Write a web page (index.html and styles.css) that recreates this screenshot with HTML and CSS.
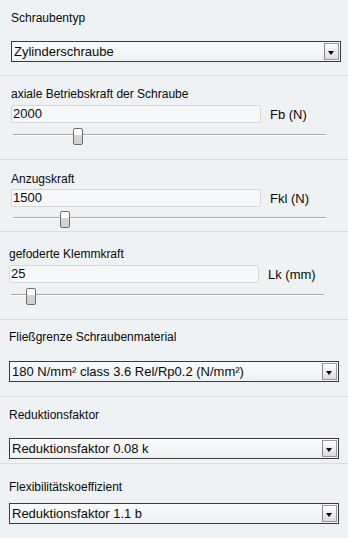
FILE: index.html
```html
<!DOCTYPE html>
<html lang="de">
<head>
    <meta charset="UTF-8">
    <meta name="viewport" content="width=device-width, initial-scale=1.0">
    <title>Schraubenberechnung</title>
    <link rel="stylesheet" href="styles.css">
</head>
<body>
    <div class="panel">
        <div class="section sec-1">
            <div class="label">Schraubentyp</div>
            <div class="select"><span class="value">Zylinderschraube</span><span class="arrow"></span></div>
        </div>

        <div class="section sec-2">
            <div class="label">axiale Betriebskraft der Schraube</div>
            <div class="row">
                <div class="input">2000</div>
                <span class="unit">Fb (N)</span>
            </div>
            <div class="slider"><div class="track"></div><div class="thumb" style="left: 60px"></div></div>
        </div>

        <div class="section sec-3">
            <div class="label">Anzugskraft</div>
            <div class="row">
                <div class="input">1500</div>
                <span class="unit">Fkl (N)</span>
            </div>
            <div class="slider"><div class="track"></div><div class="thumb" style="left: 47px"></div></div>
        </div>

        <div class="section sec-4 shift">
            <div class="label">gefoderte Klemmkraft</div>
            <div class="row">
                <div class="input">25</div>
                <span class="unit">Lk (mm)</span>
            </div>
            <div class="slider"><div class="track"></div><div class="thumb" style="left: 15px"></div></div>
        </div>

        <div class="section sec-5 shift">
            <div class="label">Fließgrenze Schraubenmaterial</div>
            <div class="select"><span class="value">180 N/mm² class 3.6 Rel/Rp0.2 (N/mm²)</span><span class="arrow"></span></div>
        </div>

        <div class="section sec-6 shift">
            <div class="label">Reduktionsfaktor</div>
            <div class="select"><span class="value">Reduktionsfaktor 0.08 k</span><span class="arrow"></span></div>
        </div>

        <div class="section sec-7 shift">
            <div class="label">Flexibilitätskoeffizient</div>
            <div class="select"><span class="value">Reduktionsfaktor 1.1 b</span><span class="arrow"></span></div>
        </div>
    </div>
</body>
</html>
```

FILE: styles.css
```css
body { margin: 0; background: #eef2f5; font-family: "Liberation Sans", Arial, sans-serif; font-size: 12px; color: #0a0a0a; }
.panel { width: 348px; height: 538px; overflow: hidden; }

.section { border-bottom: 1px solid #d9dee3; padding-left: 11px; box-sizing: border-box; }
.section.shift { padding-left: 9px; }
.label { line-height: 15px; }

/* select boxes */
.select { display: flex; width: 330px; height: 21px; box-sizing: border-box; border: 1px solid #3a3a3a; background: linear-gradient(#fafbfc, #eef1f3); }
.select .value { flex: 1; font-size: 13px; line-height: 19px; padding-left: 2px; }
.select .arrow { position: relative; width: 15px; margin: 1px; box-sizing: border-box; border: 1px solid #9a9a9a; border-left-color: #888; background: linear-gradient(#ffffff, #dcdcdc); }
.select .arrow::after { content: ""; position: absolute; left: 3px; top: 7px; border-left: 3.5px solid transparent; border-right: 3.5px solid transparent; border-top: 4px solid #000; }

/* input rows */
.row { display: flex; align-items: center; }
.input { width: 250px; height: 18px; box-sizing: border-box; border: 1px solid #d4d8dc; border-radius: 2px; background: #f7f8f9; font-size: 13px; line-height: 16px; padding-left: 1px; }
.unit { margin-left: 9px; font-size: 13px; }

/* sliders */
.slider { position: relative; width: 313px; height: 17px; margin-left: 2px; }
.slider .track { position: absolute; left: 0; right: 0; top: 6px; height: 2px; border-top: 1px solid #a9acaf; border-bottom: 1px solid #fff; box-sizing: border-box; }
.slider .thumb { position: absolute; top: 0; width: 10px; height: 17px; box-sizing: border-box; border: 1px solid #6e6e6e; border-radius: 2px; background: linear-gradient(#ffffff 40%, #d6d6d6 40%, #cfcfcf); }

/* section spacing */
.sec-1 { height: 76px; padding-top: 11px; }
.sec-1 .label { margin-bottom: 15px; }
.sec-2 { height: 84px; padding-top: 11px; }
.sec-2 .row { margin-top: 3px; }
.sec-2 .slider { margin-top: 5px; }
.sec-3 { height: 72px; padding-top: 12px; }
.sec-3 .row { margin-top: 2px; }
.sec-3 .slider { margin-top: 4px; }
.sec-4 { height: 88px; padding-top: 15px; }
.sec-4 .row { margin-top: 3px; }
.sec-4 .slider { margin-top: 5px; }
.sec-5 { height: 77px; padding-top: 10px; }
.sec-5 .label { margin-bottom: 16px; }
.sec-6 { height: 67px; padding-top: 11px; }
.sec-6 .label { margin-bottom: 15px; }
.sec-7 { height: 75px; padding-top: 16px; border-bottom: none; }
.sec-7 .label { margin-bottom: 8px; }
```
